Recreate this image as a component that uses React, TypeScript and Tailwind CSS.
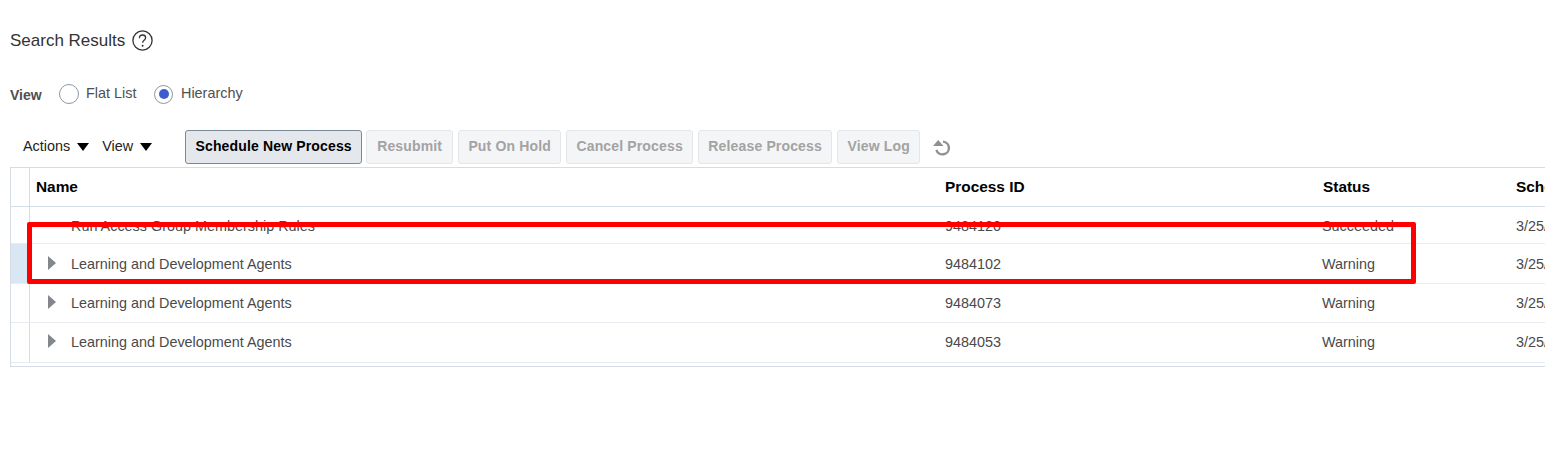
const rows = [
  { name: 'Run Access Group Membership Rules', id: '9484120', status: 'Succeeded', height: 'h-[37px]', caret: false, selected: false, textPos: 'pt-[3px]' },
  { name: 'Learning and Development Agents', id: '9484102', status: 'Warning', height: 'h-[40px]', caret: true, selected: true, textPos: 'pt-[2px]' },
  { name: 'Learning and Development Agents', id: '9484073', status: 'Warning', height: 'h-[39px]', caret: true, selected: false, textPos: 'pt-[2px]' },
  { name: 'Learning and Development Agents', id: '9484053', status: 'Warning', height: 'h-[40px]', caret: true, selected: false, textPos: '' },
];

const disabledButtons = [
  { label: 'Resubmit', width: 'w-[87px]' },
  { label: 'Put On Hold', width: 'w-[103px]' },
  { label: 'Cancel Process', width: 'w-[127px]' },
  { label: 'Release Process', width: 'w-[134px]' },
  { label: 'View Log', width: 'w-[83px]' },
];

function Caret() {
  return <span className="inline-block w-0 h-0 border-y-[7px] border-y-transparent border-l-[8px] border-l-[#83868b]" />;
}

function MenuArrow() {
  return <span className="inline-block w-0 h-0 border-x-[6.5px] border-x-transparent border-t-[8px] border-t-black" />;
}

function RefreshIcon() {
  return (
    <svg width="20" height="20" viewBox="0 0 20 20" fill="none">
      <path d="M10 3.6a6.4 6.4 0 1 1-6.6 8.2" stroke="#8d9196" strokeWidth="2.4" />
      <path d="M0 8l5.2-6 5.3 6z" fill="#8d9196" />
    </svg>
  );
}

export default function App() {
  return (
    <div className="relative w-[1545px] h-[474px] overflow-hidden bg-white font-['Liberation_Sans',Arial,sans-serif]">
      {/* Title */}
      <div className="flex items-center h-[24px] mt-[29px] ml-[10px]">
        <h1 className="text-[17px] text-[#333333] font-normal">Search Results</h1>
        <svg className="ml-[7px] mb-[1px]" width="21" height="21" viewBox="0 0 21 21" fill="none">
          <circle cx="10.5" cy="10.5" r="9.6" stroke="#333333" strokeWidth="1.3" />
          <path d="M7.4 8.2c0-2 1.4-3.2 3.2-3.2s3 1.2 3 2.8c0 2.4-3 2.4-3 4.9" stroke="#333333" strokeWidth="1.3" />
          <circle cx="10.6" cy="15.8" r="1" fill="#333333" />
        </svg>
      </div>

      {/* View radio */}
      <div className="flex items-center h-[22px] mt-[30px] ml-[10px] text-[14.4px] text-[#4f4f4f]">
        <span className="font-bold text-[14px] w-[49px] pt-[2px]">View</span>
        <span className="w-[20px] h-[20px] rounded-full border border-[#8a97a5] bg-white" />
        <span className="ml-[7px] w-[68px]">Flat List</span>
        <span className="flex items-center justify-center w-[19px] h-[19px] rounded-full border border-[#8a97a5]">
          <span className="w-[10px] h-[10px] rounded-full bg-[#3f5bd0]" />
        </span>
        <span className="ml-[8px]">Hierarchy</span>
      </div>

      {/* Toolbar */}
      <div className="flex items-center h-[34px] mt-[25px] ml-[23px]">
        <span className="text-[14.4px] text-[#222222]">Actions</span>
        <span className="ml-[7px] flex"><MenuArrow /></span>
        <span className="ml-[13px] text-[14.4px] text-[#222222]">View</span>
        <span className="ml-[7px] flex"><MenuArrow /></span>
        <button className="ml-[33px] w-[177px] h-[34px] rounded-[3px] border border-[#7b8a99] bg-[#e4e8ec] text-[14px] font-bold text-black tracking-[0.15px] pb-[2px]">
          Schedule New Process
        </button>
        <div className="flex ml-[4px] gap-[5px]">
          {disabledButtons.map((b) => (
            <button key={b.label} className={`${b.width} h-[34px] rounded-[3px] border border-[#e3e6ea] bg-[#f4f5f7] text-[14px] font-bold text-[#a3a3a3] tracking-[0.15px] pb-[2px]`}>
              {b.label}
            </button>
          ))}
        </div>
        <span className="ml-[13px] mt-[2px] flex"><RefreshIcon /></span>
      </div>

      {/* Table */}
      <div className="ml-[10px] mt-[3px] w-[1600px] border-t border-l border-b border-[#d6dce5] h-[200px]">
        <div className="grid grid-cols-[19px_908px_378px_193px_1fr] h-[38px] items-center border-b border-[#d6dce5] text-[15.4px] font-bold text-black box-content">
          <div className="h-full border-r border-[#d6dce5]" />
          <div className="pl-[6px]">Name</div>
          <div className="pl-[7px]">Process ID</div>
          <div className="pl-[7px]">Status</div>
          <div className="pl-[7px]">Schedule</div>
        </div>
        {rows.map((row) => (
          <div key={row.id} className={`grid grid-cols-[19px_908px_378px_193px_1fr] ${row.height} items-center border-b border-[#e8ebef] text-[14.4px] text-[#4a4a4a]`}>
            <div className={`h-full border-r border-[#d6dce5] ${row.selected ? 'bg-[#d9e6f4]' : ''}`} />
            <div className={`flex items-center ${row.textPos}`}>
              <span className="flex w-[41px] pl-[18px] mb-[3px]">{row.caret && <Caret />}</span>
              <span>{row.name}</span>
            </div>
            <div className={`pl-[7px] ${row.textPos}`}>{row.id}</div>
            <div className={`pl-[6px] ${row.textPos}`}>{row.status}</div>
            <div className={`pl-[7px] ${row.textPos}`}>3/25/2024</div>
          </div>
        ))}
      </div>

      {/* Red annotation drawn over the screenshot */}
      <div className="absolute left-[27px] top-[222px] w-[1389px] h-[62px] border-[5px] border-[#ff0000] rounded-[2px]" />
    </div>
  );
}
